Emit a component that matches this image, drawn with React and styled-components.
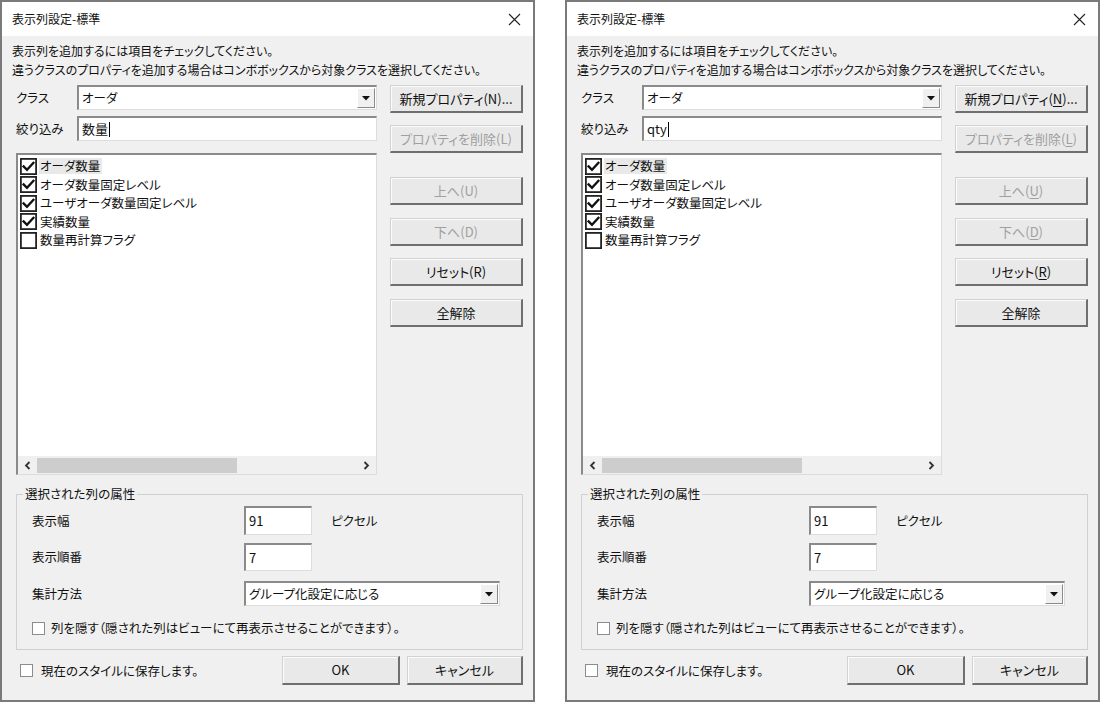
import React from 'react';
import styled, { createGlobalStyle } from 'styled-components';

const Global = createGlobalStyle`
  html, body { margin: 0; padding: 0; background: #fff; }
  body {
    font-family: "Noto Sans CJK JP", "Noto Sans", sans-serif;
    font-size: 12.5px;
    color: #111;
    font-feature-settings: "palt";
  }
  * { box-sizing: border-box; }
`;

const Page = styled.div`
  display: flex;
  gap: 30px;
  width: 1100px;
  height: 702px;
`;

const Dialog = styled.div`
  width: 535px;
  height: 702px;
  display: flex;
  flex-direction: column;
  background: #f0f0f0;
  border: 2px solid #7a7a7a;
`;

const TitleBar = styled.div`
  height: 34px;
  flex: none;
  background: #fff;
  display: flex;
  align-items: center;
  justify-content: space-between;
  padding: 0 12px 0 10px;
`;

const Title = styled.span`
  font-size: 12px;
  line-height: 16px;
`;

const Body = styled.div`
  flex: 1;
  display: flex;
  flex-direction: column;
  padding: 0 10px;
`;

const Instructions = styled.div`
  margin-top: 5px;
  font-size: 12px;
  line-height: 19px;
  white-space: nowrap;
`;

const Main = styled.div`
  display: flex;
  gap: 13px;
  margin-top: 6px;
  padding-left: 4px;
`;

const LeftCol = styled.div`
  width: 361px;
  display: flex;
  flex-direction: column;
`;

const FieldRow = styled.div`
  display: grid;
  grid-template-columns: 61px 300px;
  align-items: center;
  height: 25px;
  margin-top: ${p => p.$mt || 0}px;
`;

const Label = styled.span`
  line-height: 16px;
  white-space: nowrap;
  padding-left: ${p => p.$pl || 0}px;
`;

const Sunken = styled.div`
  background: #fff;
  border-style: solid;
  border-width: 2px 1px 1px 2px;
  border-color: #8a8a8a #dcdcdc #dcdcdc #8a8a8a;
`;

const TextBox = styled(Sunken)`
  height: ${p => p.$h || 25}px;
  width: ${p => (p.$w ? `${p.$w}px` : 'auto')};
  display: flex;
  align-items: center;
  padding-left: 3px;
  line-height: 16px;
  font-size: 13px;
`;

const ComboBox = styled(Sunken)`
  height: ${p => p.$h || 25}px;
  width: ${p => (p.$w ? `${p.$w}px` : 'auto')};
  display: flex;
  align-items: stretch;
  padding: 1px 1px 1px 3px;
`;

const ComboText = styled.span`
  flex: 1;
  display: flex;
  align-items: center;
  line-height: 16px;
`;

const ArrowBox = styled.span`
  width: 18px;
  display: flex;
  align-items: center;
  justify-content: center;
  background: #f0f0f0;
  border-style: solid;
  border-width: 1px;
  border-color: #fff #8a8a8a #8a8a8a #fff;
`;

const Caret = styled.span`
  display: inline-block;
  width: 1px;
  height: 15px;
  background: #000;
  margin-left: 1px;
`;

const ListBox = styled(Sunken)`
  margin-top: 12px;
  height: 322px;
  display: flex;
  flex-direction: column;
`;

const ListItems = styled.div`
  flex: 1;
  padding: 2px 0 0 2px;
`;

const ListItem = styled.div`
  height: 18.5px;
  display: flex;
  align-items: center;
  gap: 2px;
`;

const ItemText = styled.span`
  line-height: 16px;
  padding: 0 2px 0 1px;
  background: ${p => (p.$selected ? '#e9e9e9' : 'transparent')};
`;

const HScroll = styled.div`
  height: 18px;
  display: flex;
  align-items: center;
  background: #f0f0f0;
`;

const ScrollArrow = styled.span`
  width: 19px;
  height: 18px;
  display: flex;
  align-items: center;
  justify-content: center;
`;

const ScrollTrack = styled.div`
  flex: 1;
  height: 18px;
  display: flex;
  align-items: center;
`;

const Thumb = styled.div`
  width: 200px;
  height: 15px;
  background: #cdcdcd;
`;

const RightCol = styled.div`
  width: 133px;
  display: flex;
  flex-direction: column;
`;

const Button = styled.button`
  font: inherit;
  font-size: 13px;
  height: ${p => p.$h || 28}px;
  width: ${p => (p.$w ? `${p.$w}px` : '100%')};
  margin-top: ${p => p.$mt || 0}px;
  padding: 0;
  color: ${p => (p.disabled ? '#a0a0a0' : '#111')};
  background: #e9e9e9;
  border-style: solid;
  border-width: 1px 2px 2px 1px;
  border-color: #d2d2d2 #6f6f6f #6f6f6f #d2d2d2;
  box-shadow: inset 1px 1px 0 #fbfbfb;
  line-height: 16px;
  white-space: nowrap;
`;

const Acc = styled.span`
  text-decoration: ${p => (p.$u ? 'underline' : 'none')};
  text-underline-offset: 2px;
`;

const Group = styled.fieldset`
  margin: 11px 0 0 4px;
  width: 507px;
  padding: 4px 0 11px 15px;
  border: 1px solid #d0d0d0;
  min-inline-size: 0;
`;

const Legend = styled.legend`
  margin-left: -9px;
  padding: 0 2px;
  line-height: 16px;
`;

const PropRow = styled.div`
  display: grid;
  grid-template-columns: 212px auto 1fr;
  align-items: center;
  margin-top: ${p => p.$mt || 0}px;
`;

const CheckRow = styled.label`
  display: flex;
  align-items: center;
  gap: ${p => p.$gap || 6}px;
  height: 20px;
  margin-top: ${p => p.$mt || 0}px;
  line-height: 16px;
  white-space: nowrap;
`;

const SmallBox = styled.span`
  width: 13px;
  height: 13px;
  flex: none;
  background: #fff;
  border: 1px solid #8c8c8c;
`;

const BottomRow = styled.div`
  display: flex;
  align-items: center;
  margin-top: 6px;
  padding-left: 8px;
  gap: 7px;
`;

const Spacer = styled.div`
  flex: 1;
`;

const CheckIcon = ({ checked }) => (
  <svg width="17" height="17" viewBox="0 0 17 17" style={{ flex: 'none' }}>
    <rect x="0.9" y="0.9" width="15.2" height="15.2" fill="#fff" stroke="#222" strokeWidth="1.8" />
    {checked && (
      <path d="M3.6 8.4 L7 11.8 L13.4 4.8" fill="none" stroke="#111" strokeWidth="2.3" strokeLinecap="square" />
    )}
  </svg>
);

const CloseIcon = () => (
  <svg width="13" height="13" viewBox="0 0 13 13">
    <path d="M1 1 L12 12 M12 1 L1 12" stroke="#222" strokeWidth="1.1" />
  </svg>
);

const DownTri = () => (
  <svg width="8" height="5" viewBox="0 0 8 5">
    <path d="M0 0 H8 L4 4.5 Z" fill="#111" />
  </svg>
);

const Chevron = ({ dir }) => (
  <svg width="7" height="9" viewBox="0 0 7 9">
    <path
      d={dir === 'left' ? 'M5.5 1 L2 4.5 L5.5 8' : 'M1.5 1 L5 4.5 L1.5 8'}
      fill="none"
      stroke="#333"
      strokeWidth="1.8"
    />
  </svg>
);

const items = [
  { label: 'オーダ数量', checked: true, selected: true },
  { label: 'オーダ数量固定レベル', checked: true },
  { label: 'ユーザオーダ数量固定レベル', checked: true },
  { label: '実績数量', checked: true },
  { label: '数量再計算フラグ', checked: false },
];

const buttons = [
  { text: '新規プロパティ', key: 'N', suffix: '...', mt: 0 },
  { text: 'プロパティを削除', key: 'L', disabled: true, mt: 12 },
  { text: '上へ', key: 'U', disabled: true, mt: 24 },
  { text: '下へ', key: 'D', disabled: true, mt: 13 },
  { text: 'リセット', key: 'R', mt: 12 },
  { text: '全解除', mt: 13 },
];

const SettingsDialog = ({ filter, underline }) => (
  <Dialog>
    <TitleBar>
      <Title>表示列設定-標準</Title>
      <CloseIcon />
    </TitleBar>
    <Body>
      <Instructions>
        表示列を追加するには項目をチェックしてください。
        <br />
        違うクラスのプロパティを追加する場合はコンボボックスから対象クラスを選択してください。
      </Instructions>
      <Main>
        <LeftCol>
          <FieldRow>
            <Label>クラス</Label>
            <ComboBox>
              <ComboText>オーダ</ComboText>
              <ArrowBox>
                <DownTri />
              </ArrowBox>
            </ComboBox>
          </FieldRow>
          <FieldRow $mt={6}>
            <Label>絞り込み</Label>
            <TextBox>
              {filter}
              <Caret />
            </TextBox>
          </FieldRow>
          <ListBox>
            <ListItems>
              {items.map(it => (
                <ListItem key={it.label}>
                  <CheckIcon checked={it.checked} />
                  <ItemText $selected={it.selected}>{it.label}</ItemText>
                </ListItem>
              ))}
            </ListItems>
            <HScroll>
              <ScrollArrow>
                <Chevron dir="left" />
              </ScrollArrow>
              <ScrollTrack>
                <Thumb />
              </ScrollTrack>
              <ScrollArrow>
                <Chevron dir="right" />
              </ScrollArrow>
            </HScroll>
          </ListBox>
        </LeftCol>
        <RightCol>
          {buttons.map(b => (
            <Button key={b.text} disabled={b.disabled} $mt={b.mt}>
              {b.text}
              {b.key && (
                <>
                  (<Acc $u={underline}>{b.key}</Acc>)
                </>
              )}
              {b.suffix}
            </Button>
          ))}
        </RightCol>
      </Main>
      <Group>
        <Legend>選択された列の属性</Legend>
        <PropRow>
          <Label>表示幅</Label>
          <TextBox $w={68} $h={29}>91</TextBox>
          <Label $pl={19}>ピクセル</Label>
        </PropRow>
        <PropRow $mt={8}>
          <Label>表示順番</Label>
          <TextBox $w={68} $h={28}>7</TextBox>
        </PropRow>
        <PropRow $mt={10}>
          <Label>集計方法</Label>
          <ComboBox $w={256}>
            <ComboText>グループ化設定に応じる</ComboText>
            <ArrowBox>
              <DownTri />
            </ArrowBox>
          </ComboBox>
        </PropRow>
        <CheckRow $mt={12}>
          <SmallBox />
          列を隠す（隠された列はビューにて再表示させることができます）。
        </CheckRow>
      </Group>
      <BottomRow>
        <CheckRow $gap={8}>
          <SmallBox />
          現在のスタイルに保存します。
        </CheckRow>
        <Spacer />
        <Button $w={118} $h={29}>OK</Button>
        <Button $w={116} $h={29}>キャンセル</Button>
      </BottomRow>
    </Body>
  </Dialog>
);

export default function App() {
  return (
    <>
      <Global />
      <Page>
        <SettingsDialog filter="数量" underline={false} />
        <SettingsDialog filter="qty" underline />
      </Page>
    </>
  );
}
